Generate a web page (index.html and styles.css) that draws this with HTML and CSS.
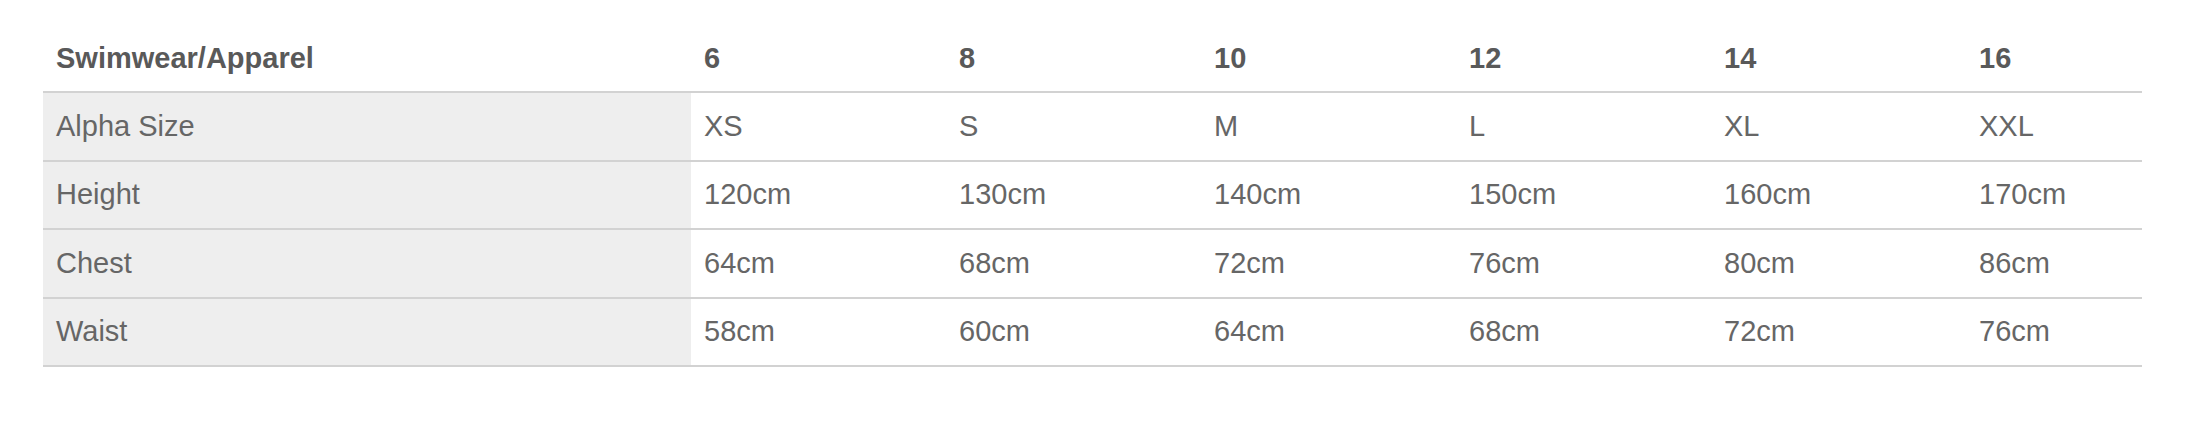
FILE: index.html
```html
<!DOCTYPE html>
<html>
<head>
<meta charset="utf-8">
<link rel="stylesheet" href="styles.css">
</head>
<body>
<div class="wrap">
<table class="size-table">
  <colgroup>
    <col class="c-label">
    <col class="c-val"><col class="c-val"><col class="c-val"><col class="c-val"><col class="c-val">
    <col class="c-last">
  </colgroup>
  <thead>
    <tr><th>Swimwear/Apparel</th><th>6</th><th>8</th><th>10</th><th>12</th><th>14</th><th>16</th></tr>
  </thead>
  <tbody>
    <tr><td class="lbl">Alpha Size</td><td>XS</td><td>S</td><td>M</td><td>L</td><td>XL</td><td>XXL</td></tr>
    <tr><td class="lbl">Height</td><td>120cm</td><td>130cm</td><td>140cm</td><td>150cm</td><td>160cm</td><td>170cm</td></tr>
    <tr><td class="lbl">Chest</td><td>64cm</td><td>68cm</td><td>72cm</td><td>76cm</td><td>80cm</td><td>86cm</td></tr>
    <tr><td class="lbl">Waist</td><td>58cm</td><td>60cm</td><td>64cm</td><td>68cm</td><td>72cm</td><td>76cm</td></tr>
  </tbody>
</table>
</div>
</body>
</html>
```

FILE: styles.css
```css
html, body {
  margin: 0;
  padding: 0;
  background: #ffffff;
}
.wrap {
  padding: 25px 0 0 43px;
}
.size-table {
  border-collapse: separate;
  border-spacing: 0;
  table-layout: fixed;
  width: 2099px;
  font-family: "Liberation Sans", Arial, sans-serif;
  font-size: 29px;
  color: #666666;
}
.c-label { width: 648px; }
.c-val { width: 255px; }
.c-last { width: 176px; }
.size-table th,
.size-table td {
  text-align: left;
  vertical-align: middle;
  padding: 0 0 0 13px;
  height: 66px;
  border-bottom: 2px solid #d2d2d2;
  white-space: nowrap;
}
.size-table th {
  font-weight: bold;
  color: #595959;
}
.size-table td {
  height: 66.5px;
}
.size-table td.lbl {
  background: #eeeeee;
}
```
